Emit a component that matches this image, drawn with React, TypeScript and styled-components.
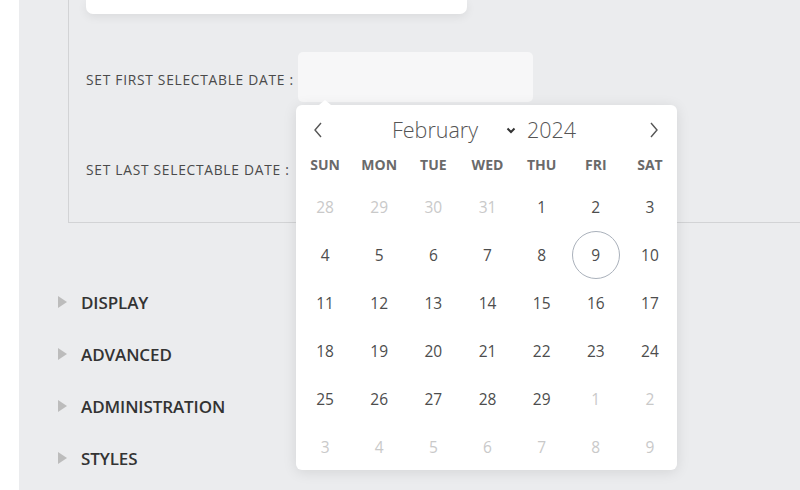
import React from "react";
import styled, { createGlobalStyle } from "styled-components";

const Global = createGlobalStyle`
  html, body { margin: 0; padding: 0; background: #ffffff; }
  body { font-family: "Open Sans", "Liberation Sans", sans-serif; }
  * { box-sizing: border-box; }
`;

const Page = styled.div`
  padding-left: 19px;
  height: 490px;
  overflow: hidden;
`;

const Panel = styled.div`
  background: #ebecee;
  height: 490px;
  position: relative;
`;

const FieldsBox = styled.div`
  margin-left: 49px;
  border-left: 1px solid #d2d3d5;
  border-bottom: 1px solid #d2d3d5;
  padding: 0 0 30px 17px;
`;

const TopCard = styled.div`
  width: 381px;
  height: 14px;
  background: #ffffff;
  border-radius: 0 0 7px 7px;
  box-shadow: 0 3px 10px rgba(0, 0, 0, 0.07);
`;

const Rows = styled.div`
  display: flex;
  flex-direction: column;
  gap: 40px;
  padding-top: 38px;
`;

const FieldRow = styled.div`
  display: grid;
  grid-template-columns: 212px 235px;
  align-items: center;
`;

const Label = styled.div<{ $dy?: number }>`
  font-size: 13.8px;
  color: #4a4a4a;
  letter-spacing: 0.72px;
  white-space: nowrap;
  margin-top: ${(p) => p.$dy ?? 0}px;
`;

const InputWrap = styled.div`
  position: relative;
`;

const Input = styled.div`
  height: 50px;
  background: #f7f7f8;
  border-radius: 5px;
`;

const Popup = styled.div`
  position: absolute;
  left: -2px;
  top: 53px;
  width: 381px;
  height: 365px;
  background: #ffffff;
  border-radius: 6px;
  box-shadow: 0 2px 14px rgba(0, 0, 0, 0.1);
  z-index: 5;
  padding: 5px 0 0 2px;
`;

const Pointer = styled.div`
  position: absolute;
  left: 23px;
  top: -5px;
  width: 0;
  height: 0;
  border-left: 6px solid transparent;
  border-right: 6px solid transparent;
  border-bottom: 5px solid #ffffff;
`;

const Header = styled.div`
  height: 40px;
  display: flex;
  align-items: center;
  position: relative;
`;

const NavButton = styled.div<{ $side: "left" | "right" }>`
  position: absolute;
  top: 12px;
  ${(p) => (p.$side === "left" ? "left: 14px;" : "right: 17px;")}
  width: 12px;
  height: 16px;
  display: flex;
  align-items: center;
  justify-content: center;
`;

const MonthYear = styled.div`
  display: flex;
  align-items: center;
  margin-left: 94px;
  font-size: 21.5px;
  font-weight: 300;
  color: #555;
  line-height: 1;
`;

const MonthSelect = styled.div`
  display: flex;
  align-items: center;
  width: 135px;
  justify-content: space-between;
  padding-right: 11px;
`;

const Year = styled.span``;

const Weekdays = styled.div`
  margin-top: 2px;
  display: grid;
  grid-template-columns: repeat(7, 1fr);
  height: 24px;
  align-items: center;
`;

const Weekday = styled.div`
  text-align: center;
  font-size: 14px;
  font-weight: 700;
  color: #6a6a6a;
`;

const Days = styled.div`
  margin-top: 7px;
  display: grid;
  grid-template-columns: repeat(7, 1fr);
  grid-auto-rows: 48px;
`;

const Day = styled.div<{ $muted?: boolean }>`
  display: flex;
  align-items: center;
  justify-content: center;
  font-size: 15.5px;
  color: ${(p) => (p.$muted ? "#c9c9c9" : "#4d4d4d")};
`;

const Circle = styled.span`
  width: 48px;
  height: 48px;
  border: 1px solid #aab1bb;
  border-radius: 50%;
  display: flex;
  align-items: center;
  justify-content: center;
`;

const Accordion = styled.div`
  margin-top: 53px;
  display: flex;
  flex-direction: column;
`;

const AccItem = styled.div`
  height: 52px;
  display: flex;
  align-items: center;
  padding-left: 39px;
  gap: 14px;
`;

const Triangle = styled.span`
  width: 0;
  height: 0;
  border-left: 9px solid #bcbcbc;
  border-top: 6px solid transparent;
  border-bottom: 6px solid transparent;
`;

const AccLabel = styled.span`
  font-size: 17px;
  font-weight: 600;
  color: #333;
  letter-spacing: -0.1px;
`;

const weekdays = ["SUN", "MON", "TUE", "WED", "THU", "FRI", "SAT"];

type Cell = { n: number; muted?: boolean; today?: boolean };

const cells: Cell[] = [
  ...[28, 29, 30, 31].map((n) => ({ n, muted: true })),
  ...Array.from({ length: 29 }, (_, i) => ({ n: i + 1, today: i + 1 === 9 })),
  ...[1, 2, 3, 4, 5, 6, 7, 8, 9].map((n) => ({ n, muted: true })),
];

const Chevron = ({ dir }: { dir: "left" | "right" }) => (
  <svg width="10" height="16" viewBox="0 0 10 16">
    <path
      d={dir === "left" ? "M8 1 L2 8 L8 15" : "M2 1 L8 8 L2 15"}
      fill="none"
      stroke="#555"
      strokeWidth="1.4"
    />
  </svg>
);

const Down = () => (
  <svg width="10" height="7" viewBox="0 0 10 7">
    <path d="M1.5 1.5 L5 5 L8.5 1.5" fill="none" stroke="#333" strokeWidth="2" />
  </svg>
);

export default function App() {
  return (
    <>
      <Global />
      <Page>
        <Panel>
          <FieldsBox>
            <TopCard />
            <Rows>
              <FieldRow>
                <Label $dy={4}>SET FIRST SELECTABLE DATE :</Label>
                <InputWrap>
                  <Input />
                  <Popup>
                    <Pointer />
                    <Header>
                      <NavButton $side="left">
                        <Chevron dir="left" />
                      </NavButton>
                      <MonthYear>
                        <MonthSelect>
                          <span>February</span>
                          <Down />
                        </MonthSelect>
                        <Year>2024</Year>
                      </MonthYear>
                      <NavButton $side="right">
                        <Chevron dir="right" />
                      </NavButton>
                    </Header>
                    <Weekdays>
                      {weekdays.map((w) => (
                        <Weekday key={w}>{w}</Weekday>
                      ))}
                    </Weekdays>
                    <Days>
                      {cells.map((c, i) => (
                        <Day key={i} $muted={c.muted}>
                          {c.today ? <Circle>{c.n}</Circle> : c.n}
                        </Day>
                      ))}
                    </Days>
                  </Popup>
                </InputWrap>
              </FieldRow>
              <FieldRow>
                <Label $dy={4}>SET LAST SELECTABLE DATE :</Label>
                <InputWrap>
                  <Input />
                </InputWrap>
              </FieldRow>
            </Rows>
          </FieldsBox>
          <Accordion>
            {["DISPLAY", "ADVANCED", "ADMINISTRATION", "STYLES"].map((t) => (
              <AccItem key={t}>
                <Triangle />
                <AccLabel>{t}</AccLabel>
              </AccItem>
            ))}
          </Accordion>
        </Panel>
      </Page>
    </>
  );
}
